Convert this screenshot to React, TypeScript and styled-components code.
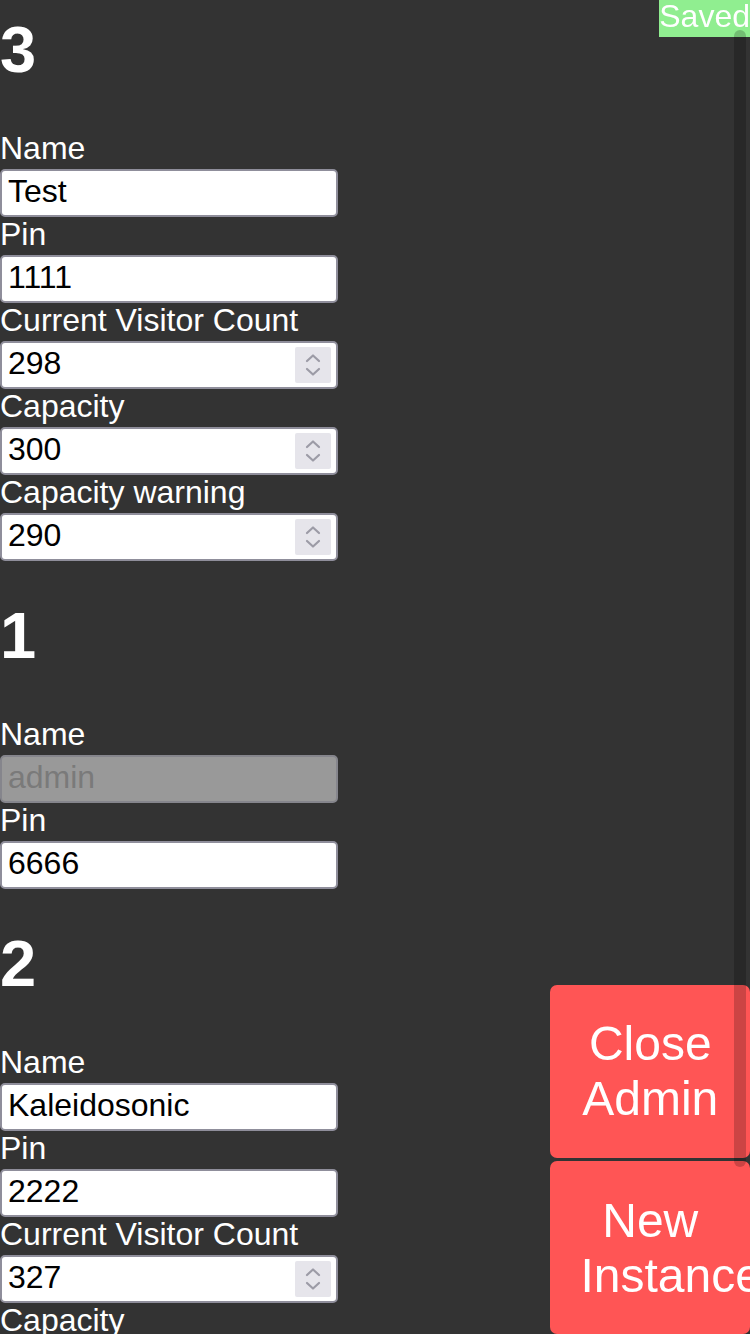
import React from "react";
import styled, { createGlobalStyle } from "styled-components";

const GlobalStyle = createGlobalStyle`
  html, body {
    margin: 0;
    padding: 0;
    height: 1334px;
    overflow: hidden;
    background: #333333;
    font-family: "Liberation Sans", Arial, Helvetica, sans-serif;
  }
  #root { height: 1334px; overflow: hidden; }
  *::-webkit-scrollbar { display: none; }
`;

const Page = styled.main`
  display: flex;
  flex-direction: column;
  padding-top: 12px;
  color: #ffffff;
`;

const Section = styled.section`
  display: flex;
  flex-direction: column;
  align-items: flex-start;
  & + & {
    margin-top: 37.5px;
  }
`;

const Heading = styled.h1`
  margin: 0 0 43.5px;
  font-size: 65px;
  font-weight: 700;
  line-height: normal;
  color: #ffffff;
`;

const Group = styled.div`
  display: flex;
  flex-direction: column;
  align-items: flex-start;
`;

const Label = styled.label`
  display: block;
  font-size: 32px;
  line-height: 35px;
  padding-bottom: 3px;
  color: #ffffff;
  white-space: nowrap;
`;

const Frame = styled.div<{ $disabled?: boolean }>`
  box-sizing: border-box;
  width: 338px;
  height: 48px;
  display: flex;
  align-items: center;
  border: 2px solid ${(p) => (p.$disabled ? "#85858c" : "#8f8e9b")};
  border-radius: 5px;
  background: ${(p) => (p.$disabled ? "#999999" : "#ffffff")};
  padding-right: 5px;
`;

const Input = styled.input`
  flex: 1;
  min-width: 0;
  height: 44px;
  box-sizing: border-box;
  border: none;
  outline: none;
  background: transparent;
  padding: 0 0 2px 6px;
  margin: 0;
  font-family: "Liberation Sans", Arial, Helvetica, sans-serif;
  font-size: 32px;
  color: #000000;
  &:disabled {
    color: #7a7a7a;
    -webkit-text-fill-color: #7a7a7a;
  }
`;

const Spinner = styled.span`
  flex: none;
  width: 36px;
  height: 36px;
  border-radius: 2px;
  background: #e6e5eb;
  display: flex;
  align-items: center;
  justify-content: center;
`;

const Saved = styled.div`
  position: fixed;
  top: 0;
  right: 0;
  background: #90ee90;
  color: #ffffff;
  font-size: 32px;
  line-height: 32px;
  padding-bottom: 4.7px;
  white-space: nowrap;
  z-index: 3;
`;

const ButtonDock = styled.div`
  position: fixed;
  right: 0;
  bottom: 0;
  display: flex;
  flex-direction: column;
  gap: 3.5px;
  z-index: 2;
`;

const ActionButton = styled.button`
  box-sizing: border-box;
  width: 200px;
  height: 173px;
  padding: 0 30px 0 30.5px;
  border: none;
  border-radius: 7px;
  background: #ff5555;
  color: #ffffff;
  font-family: "Liberation Sans", Arial, Helvetica, sans-serif;
  font-size: 48px;
  line-height: normal;
  text-align: center;
  cursor: pointer;
`;

const ScrollThumb = styled.div`
  position: fixed;
  top: 30px;
  right: 4px;
  width: 12px;
  height: 1137px;
  border-radius: 6px;
  background: rgba(0, 0, 0, 0.2);
  z-index: 4;
  pointer-events: none;
`;

const Chevrons = () => (
  <svg width="18" height="30" viewBox="0 0 18 30" fill="none">
    <path d="M3 11 L9 5.5 L15 11" stroke="#9c9ba6" strokeWidth="2.2" strokeLinecap="round" strokeLinejoin="round" />
    <path d="M3 19 L9 24.5 L15 19" stroke="#9c9ba6" strokeWidth="2.2" strokeLinecap="round" strokeLinejoin="round" />
  </svg>
);

type FieldProps = {
  label: string;
  value: string;
  number?: boolean;
  disabled?: boolean;
};

const Field = ({ label, value, number, disabled }: FieldProps) => (
  <Group>
    <Label>{label}</Label>
    <Frame $disabled={disabled}>
      <Input type="text" defaultValue={value} disabled={disabled} inputMode={number ? "numeric" : undefined} />
      {number && (
        <Spinner>
          <Chevrons />
        </Spinner>
      )}
    </Frame>
  </Group>
);

type Instance = {
  id: string;
  name: string;
  pin: string;
  admin?: boolean;
  count?: string;
  capacity?: string;
  warning?: string;
};

const instances: Instance[] = [
  { id: "3", name: "Test", pin: "1111", count: "298", capacity: "300", warning: "290" },
  { id: "1", name: "admin", pin: "6666", admin: true },
  { id: "2", name: "Kaleidosonic", pin: "2222", count: "327", capacity: "330", warning: "320" },
];

export default function App() {
  return (
    <>
      <GlobalStyle />
      <Page>
        {instances.map((it) => (
          <Section key={it.id}>
            <Heading>{it.id}</Heading>
            <Field label="Name" value={it.name} disabled={it.admin} />
            <Field label="Pin" value={it.pin} />
            {!it.admin && (
              <>
                <Field label="Current Visitor Count" value={it.count ?? ""} number />
                <Field label="Capacity" value={it.capacity ?? ""} number />
                <Field label="Capacity warning" value={it.warning ?? ""} number />
              </>
            )}
          </Section>
        ))}
      </Page>
      <Saved>Saved</Saved>
      <ButtonDock>
        <ActionButton>Close Admin</ActionButton>
        <ActionButton>New Instance</ActionButton>
      </ButtonDock>
      <ScrollThumb />
    </>
  );
}
